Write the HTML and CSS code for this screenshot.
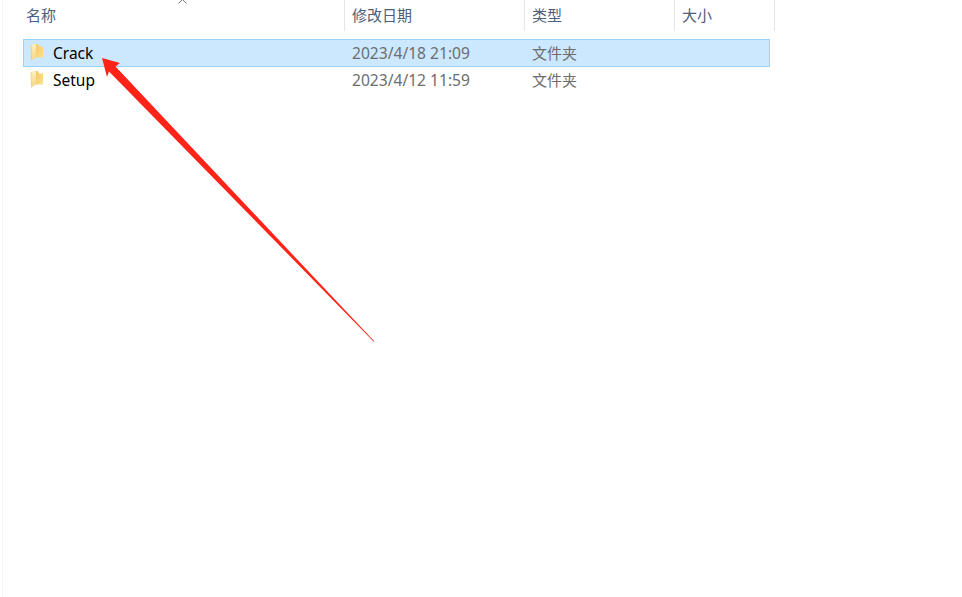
FILE: index.html
```html
<!DOCTYPE html>
<html lang="zh-CN">
<head>
<meta charset="utf-8">
<title>文件夹</title>
<link rel="stylesheet" href="styles.css">
</head>
<body>
<svg class="defs" width="0" height="0">
  <defs>
    <linearGradient id="fback" x1="0" y1="0" x2="1" y2="1"><stop offset="0" stop-color="#f3c65f"/><stop offset="1" stop-color="#fde08f"/></linearGradient>
    <linearGradient id="ffront" x1="0" y1="0" x2="0" y2="1"><stop offset="0" stop-color="#fdf0c2"/><stop offset="1" stop-color="#f6d684"/></linearGradient>
    <symbol id="folder" viewBox="0 0 14 18">
      <path d="M4 1 H8 L9 3.5 H13 V14.5 H4 Z" fill="url(#fback)"/>
      <path d="M1 2 L6 1 V3.5 L5.5 14.5 L1.5 17.5 Z" fill="url(#ffront)"/>
      <path d="M1 2 L1.5 17.5" fill="none" stroke="#e8c56d" stroke-width=".7"/>
    </symbol>
  </defs>
</svg>
<div class="explorer">
  <div class="header">
    <div class="col col-name head">名称
      <svg class="sort" width="9" height="5" viewBox="0 0 9 5"><path d="M0.5 4.5 L4.5 0.5 L8.5 4.5" fill="none" stroke="#7a7a7a" stroke-width="1"/></svg>
    </div>
    <div class="col col-date head">修改日期</div>
    <div class="col col-type head">类型</div>
    <div class="col col-size head">大小</div>
  </div>
  <div class="rows">
    <div class="row selected">
      <div class="cell-name">
        <svg class="folder" width="14" height="18"><use href="#folder"/></svg>
        <span class="name">Crack</span>
      </div>
      <div class="cell-date">2023/4/18 21:09</div>
      <div class="cell-type">文件夹</div>
    </div>
    <div class="row">
      <div class="cell-name">
        <svg class="folder" width="14" height="18"><use href="#folder"/></svg>
        <span class="name">Setup</span>
      </div>
      <div class="cell-date">2023/4/12 11:59</div>
      <div class="cell-type">文件夹</div>
    </div>
  </div>
</div>
<svg class="arrow" width="962" height="597" viewBox="0 0 962 597"><path d="M102 58 L120 63 L115.5 66.5 L374.5 341.5 L373.5 341.5 L109 71.5 L107 77 Z" fill="#ff2318"/></svg>
</body>
</html>
```
FILE: styles.css
```css
html, body {
  margin: 0;
  padding: 0;
  width: 962px;
  height: 597px;
  overflow: hidden;
  background: #fff;
}
body {
  position: relative;
  font-family: "Noto Sans CJK SC", "Noto Sans", sans-serif;
  font-size: 15px;
}
.defs { position: absolute; }
.explorer {
  margin-left: 2px;
  height: 597px;
  border-left: 1px solid #f4f4f4;
  box-sizing: border-box;
}
.header {
  display: flex;
  height: 31px;
  padding-left: 15px;
}
.col {
  box-sizing: border-box;
  padding-left: 7px;
  line-height: 29px;
  color: #4c607a;
  border-right: 1px solid #e5e5e5;
}
.head { position: relative; }
.col-name { width: 327px; padding-left: 8px; }
.col-date { width: 180px; }
.col-type { width: 150px; }
.col-size { width: 100px; }
.sort {
  position: absolute;
  left: 160px;
  top: -1px;
}
.rows {
  margin-top: 8px;
  margin-left: 20px;
  width: 747px;
}
.row {
  display: flex;
  box-sizing: border-box;
  height: 28px;
  line-height: 26px;
  border: 1px solid transparent;
  color: #6d6d6d;
}
.row + .row { margin-top: -1px; }
.selected {
  background: #cce8ff;
  border-color: #99d1ff;
}
.cell-name {
  display: flex;
  align-items: center;
  width: 328px;
  padding-left: 6px;
  box-sizing: border-box;
  gap: 9px;
}
.name { color: #000; font-family: "Noto Sans", sans-serif; font-size: 15.5px; }
.folder { flex: none; margin-top: -3px; }
.cell-date { width: 180px; font-family: "Noto Sans", sans-serif; font-size: 15.6px; line-height: 27px; }
.cell-type { width: 150px; }
.arrow {
  position: absolute;
  left: 0;
  top: 0;
  pointer-events: none;
}
```
